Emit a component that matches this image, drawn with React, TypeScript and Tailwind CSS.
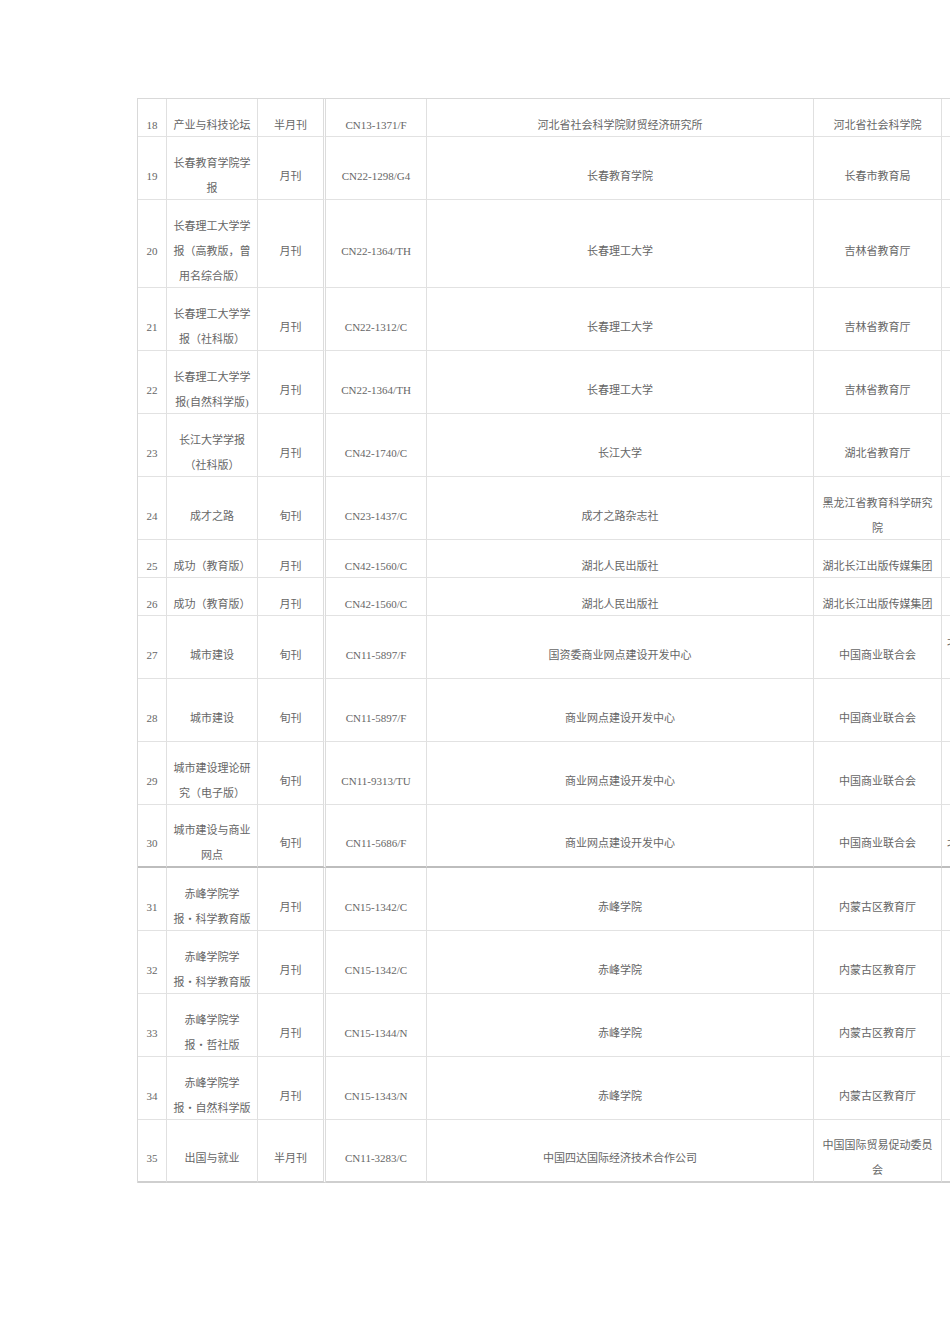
import React from "react";

type Row = {
  n: string;
  name: string[];
  freq: string;
  cn: string;
  org: string;
  sup: string[];
  extra: string[];
  extraLeft?: boolean;
  thick?: boolean;
  last?: boolean;
};

const rows: Row[] = [
  { n: "18", name: ["产业与科技论坛"], freq: "半月刊", cn: "CN13-1371/F", org: "河北省社会科学院财贸经济研究所", sup: ["河北省社会科学院"], extra: [""] },
  { n: "19", name: ["长春教育学院学", "报"], freq: "月刊", cn: "CN22-1298/G4", org: "长春教育学院", sup: ["长春市教育局"], extra: [""] },
  { n: "20", name: ["长春理工大学学", "报（高教版，曾", "用名综合版）"], freq: "月刊", cn: "CN22-1364/TH", org: "长春理工大学", sup: ["吉林省教育厅"], extra: [""] },
  { n: "21", name: ["长春理工大学学", "报（社科版）"], freq: "月刊", cn: "CN22-1312/C", org: "长春理工大学", sup: ["吉林省教育厅"], extra: [""] },
  { n: "22", name: ["长春理工大学学", "报(自然科学版)"], freq: "月刊", cn: "CN22-1364/TH", org: "长春理工大学", sup: ["吉林省教育厅"], extra: [""] },
  { n: "23", name: ["长江大学学报", "（社科版）"], freq: "月刊", cn: "CN42-1740/C", org: "长江大学", sup: ["湖北省教育厅"], extra: [""] },
  { n: "24", name: ["成才之路"], freq: "旬刊", cn: "CN23-1437/C", org: "成才之路杂志社", sup: ["黑龙江省教育科学研究", "院"], extra: [""] },
  { n: "25", name: ["成功（教育版）"], freq: "月刊", cn: "CN42-1560/C", org: "湖北人民出版社", sup: ["湖北长江出版传媒集团"], extra: [""] },
  { n: "26", name: ["成功（教育版）"], freq: "月刊", cn: "CN42-1560/C", org: "湖北人民出版社", sup: ["湖北长江出版传媒集团"], extra: [""] },
  { n: "27", name: ["城市建设"], freq: "旬刊", cn: "CN11-5897/F", org: "国资委商业网点建设开发中心", sup: ["中国商业联合会"], extra: ["北京市西城区月坛北", ""], extraLeft: true },
  { n: "28", name: ["城市建设"], freq: "旬刊", cn: "CN11-5897/F", org: "商业网点建设开发中心", sup: ["中国商业联合会"], extra: ["", ""] },
  { n: "29", name: ["城市建设理论研", "究（电子版）"], freq: "旬刊", cn: "CN11-9313/TU", org: "商业网点建设开发中心", sup: ["中国商业联合会"], extra: [""] },
  { n: "30", name: ["城市建设与商业", "网点"], freq: "旬刊", cn: "CN11-5686/F", org: "商业网点建设开发中心", sup: ["中国商业联合会"], extra: ["北京市西城区月坛北街"], extraLeft: true, thick: true },
  { n: "31", name: ["赤峰学院学", "报・科学教育版"], freq: "月刊", cn: "CN15-1342/C", org: "赤峰学院", sup: ["内蒙古区教育厅"], extra: [""] },
  { n: "32", name: ["赤峰学院学", "报・科学教育版"], freq: "月刊", cn: "CN15-1342/C", org: "赤峰学院", sup: ["内蒙古区教育厅"], extra: [""] },
  { n: "33", name: ["赤峰学院学", "报・哲社版"], freq: "月刊", cn: "CN15-1344/N", org: "赤峰学院", sup: ["内蒙古区教育厅"], extra: [""] },
  { n: "34", name: ["赤峰学院学", "报・自然科学版"], freq: "月刊", cn: "CN15-1343/N", org: "赤峰学院", sup: ["内蒙古区教育厅"], extra: [""] },
  { n: "35", name: ["出国与就业"], freq: "半月刊", cn: "CN11-3283/C", org: "中国四达国际经济技术合作公司", sup: ["中国国际贸易促动委员", "会"], extra: [""], last: true },
];

function Lines({ lines }: { lines: string[] }) {
  return (
    <div className="flex flex-col">
      {lines.map((l, i) => (
        <span key={i} className="whitespace-nowrap min-h-[25px]">
          {l}
        </span>
      ))}
    </div>
  );
}

function Cell({
  row,
  children,
  className = "",
}: {
  row: Row;
  children: React.ReactNode;
  className?: string;
}) {
  const bottom = row.thick
    ? "border-b-2 border-b-[#bdbdbd] pt-[11px]"
    : row.last
    ? "border-b-2 border-b-[#cfcfcf] pt-[11px]"
    : "border-b border-b-[#e2e2e2] pt-[12px]";
  return (
    <div
      className={`flex items-center justify-center text-center overflow-hidden ${bottom} ${className}`}
    >
      <div className="translate-y-[2px]">{children}</div>
    </div>
  );
}

export default function App() {
  return (
    <div className="w-[950px] h-[1344px] overflow-hidden bg-white">
      <div className="pt-[98px] pl-[137px]">
        <div
          className="grid grid-cols-[29px_91px_68px_101px_387px_128px_300px] border-t border-l border-[#d9d9d9] text-[11px] leading-[25px] text-[#666]"
          style={{ fontFamily: '"Liberation Serif", "Noto Sans CJK SC", serif' }}
        >
          {rows.map((r) => (
            <React.Fragment key={r.n}>
              <Cell row={r} className="border-r border-r-[#e0e0e0]">
                {r.n}
              </Cell>
              <Cell row={r} className="border-r border-r-[#e0e0e0]">
                <Lines lines={r.name} />
              </Cell>
              <Cell row={r} className="border-r-[3px] border-double border-r-[#dcdcdc]">
                {r.freq}
              </Cell>
              <Cell row={r} className="border-r border-r-[#e0e0e0]">
                {r.cn}
              </Cell>
              <Cell row={r} className="border-r border-r-[#e0e0e0]">
                {r.org}
              </Cell>
              <Cell row={r} className="border-r border-r-[#e0e0e0]">
                <Lines lines={r.sup} />
              </Cell>
              <Cell
                row={r}
                className={r.extraLeft ? "!justify-start pl-[5px] text-left" : ""}
              >
                <Lines lines={r.extra} />
              </Cell>
            </React.Fragment>
          ))}
        </div>
      </div>
    </div>
  );
}
